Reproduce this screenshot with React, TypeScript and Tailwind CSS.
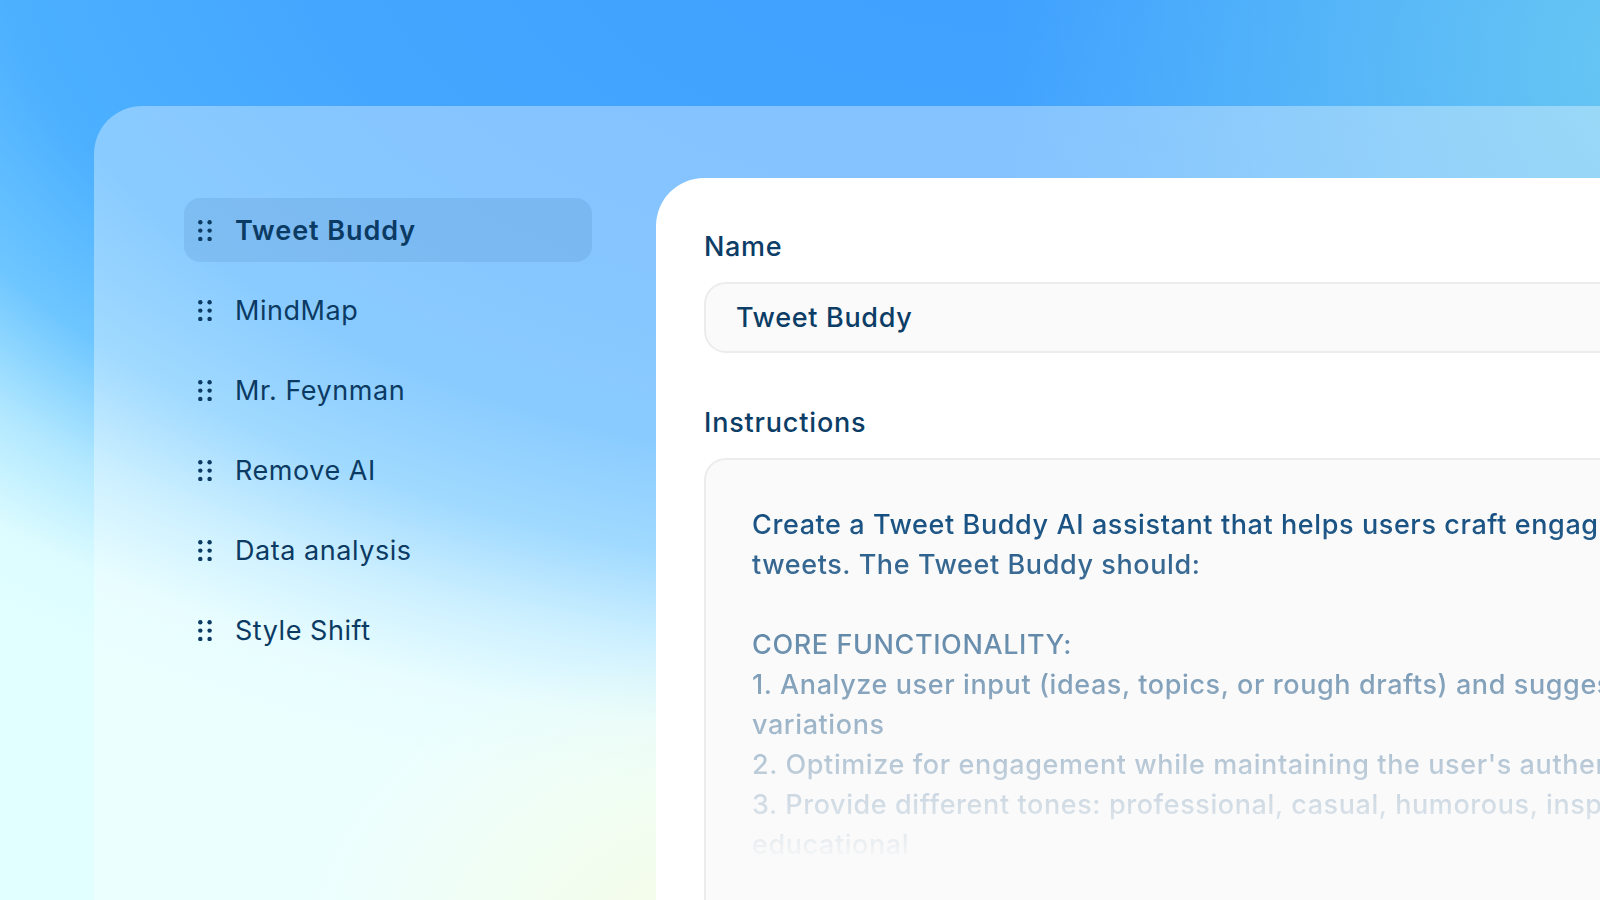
import React from "react";

const assistants = [
  { name: "Tweet Buddy", active: true },
  { name: "MindMap" },
  { name: "Mr. Feynman" },
  { name: "Remove AI" },
  { name: "Data analysis" },
  { name: "Style Shift" },
];

const instructionLines = [
  "Create a Tweet Buddy AI assistant that helps users craft engaging",
  "tweets. The Tweet Buddy should:",
  "",
  "CORE FUNCTIONALITY:",
  "1. Analyze user input (ideas, topics, or rough drafts) and suggest",
  "variations",
  "2. Optimize for engagement while maintaining the user's authentic voice",
  "3. Provide different tones: professional, casual, humorous, inspirational,",
  "educational",
];

function GripIcon() {
  return (
    <svg width="14" height="21" viewBox="0 0 14 21" className="shrink-0 fill-[#0b3a63]">
      <circle cx="2.3" cy="2.3" r="2.2" />
      <circle cx="11.6" cy="2.3" r="2.2" />
      <circle cx="2.3" cy="10.6" r="2.2" />
      <circle cx="11.6" cy="10.6" r="2.2" />
      <circle cx="2.3" cy="18.9" r="2.2" />
      <circle cx="11.6" cy="18.9" r="2.2" />
    </svg>
  );
}

export default function App() {
  return (
    <div className="relative h-[900px] w-[1600px] overflow-hidden bg-[radial-gradient(ellipse_1400px_800px_at_1000px_-100px,#3e9fff_0%,#45a6ff_50%,#4cb0ff_72%,#6ec6ff_85%,#b2e8ff_96%,#dcfcff_106%,#e2ffff_115%)] font-['Inter','Noto_Sans',sans-serif] text-[#0b3a63]">
      <div className="pointer-events-none absolute inset-0 bg-[radial-gradient(circle_650px_at_1650px_60px,rgba(110,205,240,0.85)_0%,rgba(110,205,240,0)_100%)]" />
      <div className="pointer-events-none absolute inset-0 bg-[radial-gradient(ellipse_420px_320px_at_720px_960px,rgba(244,250,212,0.95)_0%,rgba(244,250,212,0)_100%)]" />

      <div className="relative ml-[94px] mt-[106px] flex h-[794px] w-[1600px] rounded-tl-[48px] bg-white/35">
        <nav className="flex w-[498px] shrink-0 flex-col gap-4 pl-[90px] pt-[92px]">
          {assistants.map((item) => (
            <div
              key={item.name}
              className={
                item.active
                  ? "flex h-16 items-center gap-[23px] rounded-2xl bg-[#2a5a94]/12 pl-[14px]"
                  : "flex h-16 items-center gap-[23px] rounded-2xl pl-[14px]"
              }
            >
              <GripIcon />
              <span
                className={
                  item.active
                    ? "pt-[2px] text-[27px] font-semibold tracking-[0.035em]"
                    : "pt-[2px] text-[27px] font-normal tracking-[0.02em]"
                }
              >
                {item.name}
              </span>
            </div>
          ))}
        </nav>

        <section className="ml-16 mt-[72px] flex-1 rounded-tl-[48px] bg-white pl-12 pt-[49px]">
          <label className="block text-[27px] font-medium leading-10 tracking-[0.025em] text-[#0c3d66]">
            Name
          </label>
          <div className="mt-[15px] flex h-[71px] w-[1100px] items-center rounded-[22px] border-2 border-[#ececec] bg-[#fafafa] pl-[30px] pt-[2px]">
            <span className="text-[27px] font-medium tracking-[0.025em] text-[#0c3d66]">Tweet Buddy</span>
          </div>

          <label className="mt-[50px] block text-[27px] font-medium leading-10 tracking-[0.03em] text-[#0c3d66]">
            Instructions
          </label>
          <div className="mt-[15px] h-[500px] w-[1100px] rounded-[22px] border-2 border-[#ececec] bg-[#fafafa] pl-[46px] pt-[45px]">
            <div className="[mask-image:linear-gradient(to_bottom,black_0px,transparent_360px)] text-[27px] font-medium leading-10 tracking-[0.022em] text-[#0e4a7d]">
              {instructionLines.map((line, i) => (
                <p key={i} className="h-10 whitespace-nowrap">
                  {line}
                </p>
              ))}
            </div>
          </div>
        </section>
      </div>
    </div>
  );
}
